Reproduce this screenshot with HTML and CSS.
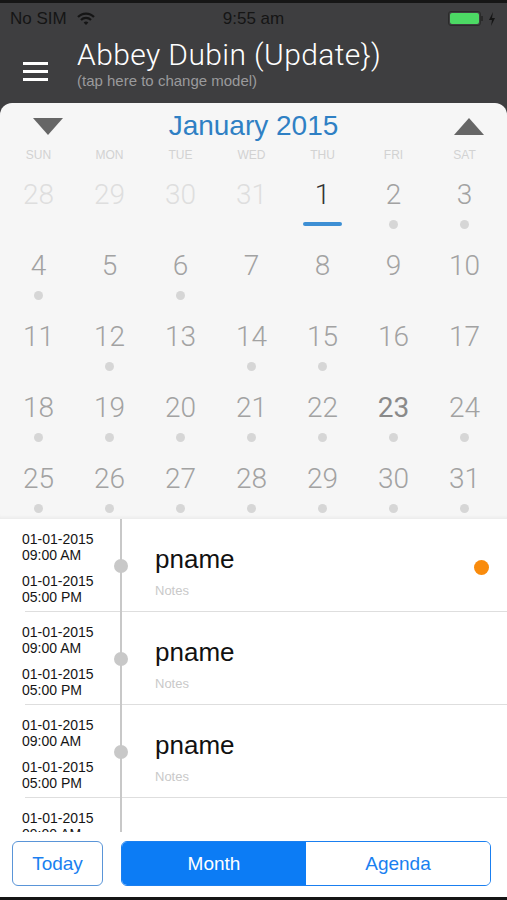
FILE: index.html
```html
<!DOCTYPE html>
<html lang="en">
<head>
    <meta charset="UTF-8">
    <meta name="viewport" content="width=device-width, initial-scale=1.0">
    <title>Calendar</title>
    <link rel="stylesheet" href="styles.css">
</head>
<body>
    <div id="app">
        <div id="top">
            <div class="status_bar">
                <div class="status_left">
                    <span>No SIM</span>
                    <svg class="wifi" width="18" height="14" viewBox="0 0 18 14">
                        <path d="M1 5 A11 11 0 0 1 17 5" fill="none" stroke="#151515" stroke-width="2.2"/>
                        <path d="M4 8 A7 7 0 0 1 14 8" fill="none" stroke="#151515" stroke-width="2.2"/>
                        <path d="M9 13 L6.6 10.6 A3.4 3.4 0 0 1 11.4 10.6 Z" fill="#151515"/>
                    </svg>
                </div>
                <span class="clock">9:55 am</span>
                <div class="status_right">
                    <span class="battery"><span class="battery_fill"></span></span>
                    <span class="battery_nub"></span>
                    <svg width="8" height="14" viewBox="0 0 8 14">
                        <path d="M5 0 L1 8 H4 L3 14 L7 6 H4 Z" fill="#151515"/>
                    </svg>
                </div>
            </div>
            <div class="nav_bar">
                <div class="menu_btn">
                    <span></span><span></span><span></span>
                </div>
                <div class="nav_title">
                    <span class="title">Abbey Dubin (Update})</span>
                    <span class="subtitle">(tap here to change model)</span>
                </div>
            </div>
        </div>

        <div id="calendar">
            <div class="cal_head">
                <span class="arrow arrow_down"></span>
                <span class="month_name">January 2015</span>
                <span class="arrow arrow_up"></span>
            </div>
            <div class="weekdays">
                <span>SUN</span><span>MON</span><span>TUE</span><span>WED</span><span>THU</span><span>FRI</span><span>SAT</span>
            </div>
            <div class="days">
                <div class="day other"><span class="num">28</span></div>
                <div class="day other"><span class="num">29</span></div>
                <div class="day other"><span class="num">30</span></div>
                <div class="day other"><span class="num">31</span></div>
                <div class="day today"><span class="num">1</span><span class="bar"></span></div>
                <div class="day"><span class="num">2</span><span class="dot"></span></div>
                <div class="day"><span class="num">3</span><span class="dot"></span></div>

                <div class="day"><span class="num">4</span><span class="dot"></span></div>
                <div class="day"><span class="num">5</span></div>
                <div class="day"><span class="num">6</span><span class="dot"></span></div>
                <div class="day"><span class="num">7</span></div>
                <div class="day"><span class="num">8</span></div>
                <div class="day"><span class="num">9</span></div>
                <div class="day"><span class="num">10</span></div>

                <div class="day"><span class="num">11</span></div>
                <div class="day"><span class="num">12</span><span class="dot"></span></div>
                <div class="day"><span class="num">13</span></div>
                <div class="day"><span class="num">14</span><span class="dot"></span></div>
                <div class="day"><span class="num">15</span><span class="dot"></span></div>
                <div class="day"><span class="num">16</span></div>
                <div class="day"><span class="num">17</span></div>

                <div class="day"><span class="num">18</span><span class="dot"></span></div>
                <div class="day"><span class="num">19</span><span class="dot"></span></div>
                <div class="day"><span class="num">20</span><span class="dot"></span></div>
                <div class="day"><span class="num">21</span><span class="dot"></span></div>
                <div class="day"><span class="num">22</span><span class="dot"></span></div>
                <div class="day selected"><span class="num">23</span><span class="dot"></span></div>
                <div class="day"><span class="num">24</span><span class="dot"></span></div>

                <div class="day"><span class="num">25</span><span class="dot"></span></div>
                <div class="day"><span class="num">26</span><span class="dot"></span></div>
                <div class="day"><span class="num">27</span><span class="dot"></span></div>
                <div class="day"><span class="num">28</span><span class="dot"></span></div>
                <div class="day"><span class="num">29</span><span class="dot"></span></div>
                <div class="day"><span class="num">30</span><span class="dot"></span></div>
                <div class="day"><span class="num">31</span><span class="dot"></span></div>
            </div>
        </div>

        <div id="events">
            <div class="event">
                <div class="times">
                    <div>01-01-2015<br>09:00 AM</div>
                    <div>01-01-2015<br>05:00 PM</div>
                </div>
                <div class="line"><span class="node"></span></div>
                <div class="info">
                    <span class="ev_name">pname</span>
                    <span class="ev_notes">Notes</span>
                </div>
                <span class="flag"></span>
            </div>
            <div class="event">
                <div class="times">
                    <div>01-01-2015<br>09:00 AM</div>
                    <div>01-01-2015<br>05:00 PM</div>
                </div>
                <div class="line"><span class="node"></span></div>
                <div class="info">
                    <span class="ev_name">pname</span>
                    <span class="ev_notes">Notes</span>
                </div>
            </div>
            <div class="event">
                <div class="times">
                    <div>01-01-2015<br>09:00 AM</div>
                    <div>01-01-2015<br>05:00 PM</div>
                </div>
                <div class="line"><span class="node"></span></div>
                <div class="info">
                    <span class="ev_name">pname</span>
                    <span class="ev_notes">Notes</span>
                </div>
            </div>
            <div class="event partial">
                <div class="times">
                    <div>01-01-2015<br>09:00 AM</div>
                </div>
                <div class="line"></div>
            </div>
        </div>

        <div id="bottom_bar">
            <button class="today_btn">Today</button>
            <div class="segment">
                <button class="active">Month</button>
                <button>Agenda</button>
            </div>
        </div>
    </div>
</body>
</html>
```

FILE: styles.css
```css
* {
    margin: 0;
    padding: 0;
    box-sizing: border-box;
}

body {
    width: 507px;
    height: 900px;
    background-color: #151515;
    font-family: "Liberation Sans", Arial, sans-serif;
    overflow: hidden;
}

#app {
    height: 900px;
    display: flex;
    flex-direction: column;
    border-top: 3px solid #161616;
    border-bottom: 3px solid #161616;
    background-color: #3e3e40;
}

/* status + nav */
#top {
    height: 100px;
    display: flex;
    flex-direction: column;
}

.status_bar {
    height: 31px;
    padding: 0 10px;
    display: flex;
    align-items: center;
    justify-content: space-between;
    color: #151515;
    font-size: 17px;
}

.status_left {
    width: 110px;
    display: flex;
    align-items: center;
    gap: 10px;
}

.clock {
    font-size: 17px;
}

.status_right {
    width: 110px;
    display: flex;
    align-items: center;
    justify-content: flex-end;
    padding-right: 1px;
}

.battery {
    width: 33px;
    height: 15px;
    padding: 1px;
    border: 1px solid #2a2a2a;
    border-radius: 3px;
    display: flex;
}

.battery_fill {
    flex: 1;
    background-color: #4cd964;
    border-radius: 2px;
}

.battery_nub {
    width: 2px;
    height: 5px;
    margin-right: 5px;
    background-color: #2a2a2a;
}

.nav_bar {
    flex: 1;
    display: flex;
    align-items: flex-start;
    padding: 3px 0 0 23px;
    gap: 29px;
}

.menu_btn {
    width: 25px;
    display: flex;
    flex-direction: column;
    gap: 5px;
    margin-top: 25px;
}

.menu_btn > span {
    height: 3px;
    background-color: #fff;
}

.nav_title {
    display: flex;
    flex-direction: column;
}

.title {
    font-family: Roboto, sans-serif;
    font-weight: 300;
    font-size: 30px;
    line-height: 36px;
    letter-spacing: 0.4px;
    color: #fff;
}

.subtitle {
    font-size: 15px;
    line-height: 16px;
    color: #9a9a9c;
}

/* calendar */
#calendar {
    height: 416px;
    background-color: #f6f6f6;
    border-radius: 12px 12px 0 0;
    box-shadow: inset 0 -4px 3px -2px #ececec;
    overflow: hidden;
}

.cal_head {
    height: 42px;
    padding: 4px 23px 0 33px;
    display: flex;
    align-items: center;
    justify-content: space-between;
}

.arrow {
    width: 0;
    height: 0;
    border-left: 15px solid transparent;
    border-right: 15px solid transparent;
}

.arrow_down {
    border-top: 17px solid #666;
}

.arrow_up {
    border-bottom: 17px solid #666;
}

.month_name {
    margin-right: 10px;
    font-size: 28px;
    color: #2f80c4;
}

.weekdays, .days {
    display: grid;
    grid-template-columns: repeat(7, 1fr);
    padding: 0 7px 0 3px;
}

.weekdays {
    height: 19px;
    font-size: 12px;
    color: #d2d2d2;
    text-align: center;
    align-items: center;
}

.day {
    height: 71px;
    display: flex;
    flex-direction: column;
    align-items: center;
    padding-top: 16px;
}

.num {
    font-family: Roboto, sans-serif;
    font-weight: 300;
    font-size: 28px;
    line-height: 30px;
    color: #a2a2a2;
}

.day.other .num {
    color: #dedede;
}

.day.today .num {
    color: #333;
}

.day.selected .num {
    color: #8a8a8a;
    font-weight: 400;
}

.dot {
    width: 9px;
    height: 9px;
    margin-top: 10px;
    border-radius: 50%;
    background-color: #d6d6d6;
}

.bar {
    width: 39px;
    height: 4px;
    margin-top: 12px;
    border-radius: 2px;
    background-color: #3d8fd4;
}

/* event list */
#events {
    height: 313px;
    background-color: #fff;
    overflow: hidden;
}

.event {
    height: 93px;
    display: grid;
    grid-template-columns: 114px 14px 1fr 33px;
    background: linear-gradient(#dedede, #dedede) 25px 100% / calc(100% - 25px) 1px no-repeat;
}

.event.partial {
    height: 34px;
    overflow: hidden;
    background: none;
}

.times {
    padding: 12px 0 0 22px;
    display: flex;
    flex-direction: column;
    gap: 10px;
    font-size: 14px;
    line-height: 16px;
    color: #151515;
}

.line {
    background: linear-gradient(#c8c8c8, #c8c8c8) center / 2px 100% no-repeat;
    padding-top: 40px;
}

.node {
    display: block;
    width: 14px;
    height: 14px;
    border-radius: 50%;
    background-color: #c8c8c8;
}

.info {
    padding: 24px 0 0 27px;
    display: flex;
    flex-direction: column;
}

.ev_name {
    font-size: 26px;
    line-height: 32px;
    color: #111;
}

.ev_notes {
    margin-top: 8px;
    font-size: 13px;
    line-height: 16px;
    color: #c9c9c9;
}

.flag {
    width: 15px;
    height: 15px;
    margin-top: 41px;
    border-radius: 50%;
    background-color: #f98b0c;
}

/* bottom buttons */
#bottom_bar {
    flex: 1;
    background-color: #fff;
    display: flex;
    align-items: flex-start;
    padding: 9px 16px 0 12px;
    gap: 18px;
}

#bottom_bar button {
    height: 45px;
    font-family: "Liberation Sans", sans-serif;
    font-size: 19px;
    color: #1a7ff0;
    background-color: #fff;
}

.today_btn {
    width: 91px;
    border: 1px solid #5a95d8;
    border-radius: 6px;
}

.segment {
    flex: 1;
    height: 45px;
    display: flex;
    border: 1px solid #1a7ff0;
    border-radius: 6px;
    overflow: hidden;
}

.segment > button {
    flex: 1;
    border: none;
}

#bottom_bar .segment > button {
    height: 43px;
}

#bottom_bar .segment > .active {
    background-color: #0c7cf5;
    color: #fff;
}
```
